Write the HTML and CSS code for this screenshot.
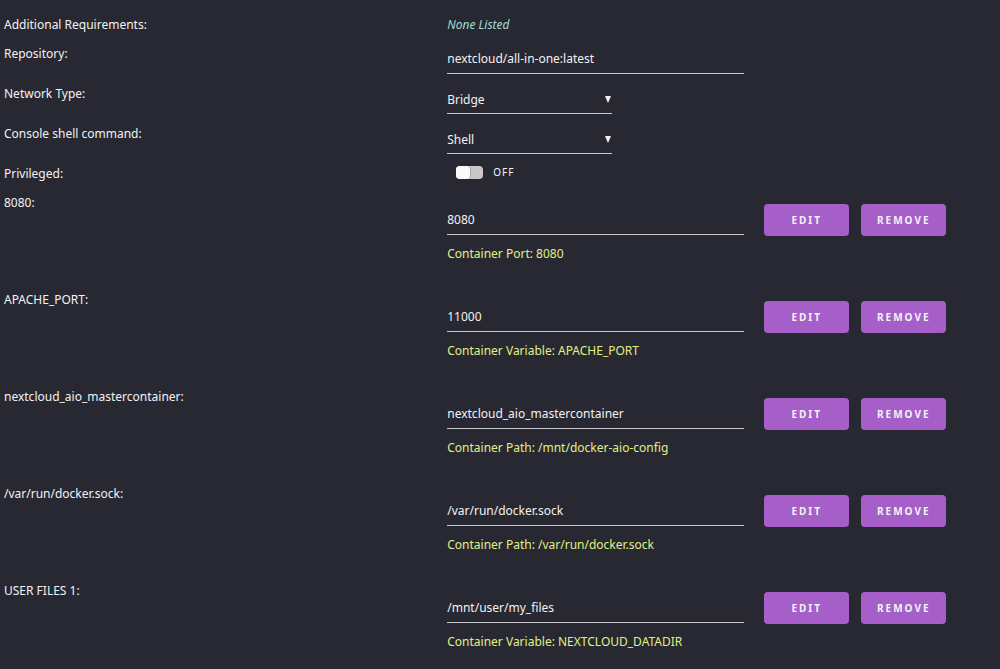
FILE: index.html
```
<!DOCTYPE html>
<html lang="en">
<head>
  <meta charset="UTF-8">
  <meta name="viewport" content="width=device-width, initial-scale=1.0">
  <title>Update Container</title>
  <link rel="stylesheet" href="styles.css">
</head>
<body>
  <form class="settings">
    <div class="row short">
      <span class="name">Additional Requirements:</span>
      <em class="none">None Listed</em>
    </div>
    <div class="row">
      <label class="name" for="repository">Repository:</label>
      <input type="text" id="repository" value="nextcloud/all-in-one:latest">
    </div>
    <div class="row">
      <label class="name" for="network">Network Type:</label>
      <div class="select">
        <select id="network">
          <option>Bridge</option>
          <option>Host</option>
          <option>None</option>
        </select>
      </div>
    </div>
    <div class="row">
      <label class="name" for="shell">Console shell command:</label>
      <div class="select">
        <select id="shell">
          <option>Shell</option>
          <option>Bash</option>
        </select>
      </div>
    </div>
    <div class="row short">
      <label class="name" for="privileged">Privileged:</label>
      <div class="switch">
        <input type="checkbox" id="privileged">
        <span>OFF</span>
      </div>
    </div>

    <!-- container config -->
    <div class="row config">
      <label class="name" for="conf1">8080:</label>
      <div class="value">
        <div class="line">
          <input type="text" id="conf1" value="8080">
          <button type="button">Edit</button>
          <button type="button">Remove</button>
        </div>
        <div class="desc">Container Port: 8080</div>
      </div>
    </div>
    <div class="row config">
      <label class="name" for="conf2">APACHE_PORT:</label>
      <div class="value">
        <div class="line">
          <input type="text" id="conf2" value="11000">
          <button type="button">Edit</button>
          <button type="button">Remove</button>
        </div>
        <div class="desc">Container Variable: APACHE_PORT</div>
      </div>
    </div>
    <div class="row config">
      <label class="name" for="conf3">nextcloud_aio_mastercontainer:</label>
      <div class="value">
        <div class="line">
          <input type="text" id="conf3" value="nextcloud_aio_mastercontainer">
          <button type="button">Edit</button>
          <button type="button">Remove</button>
        </div>
        <div class="desc">Container Path: /mnt/docker-aio-config</div>
      </div>
    </div>
    <div class="row config">
      <label class="name" for="conf4">/var/run/docker.sock:</label>
      <div class="value">
        <div class="line">
          <input type="text" id="conf4" value="/var/run/docker.sock">
          <button type="button">Edit</button>
          <button type="button">Remove</button>
        </div>
        <div class="desc">Container Path: /var/run/docker.sock</div>
      </div>
    </div>
    <div class="row config">
      <label class="name" for="conf5">USER FILES 1:</label>
      <div class="value">
        <div class="line">
          <input type="text" id="conf5" value="/mnt/user/my_files">
          <button type="button">Edit</button>
          <button type="button">Remove</button>
        </div>
        <div class="desc">Container Variable: NEXTCLOUD_DATADIR</div>
      </div>
    </div>
  </form>
</body>
</html>
```
FILE: styles.css
```
* {
  box-sizing: border-box;
}
body {
  margin: 0;
  background-color: #282833;
  color: #f2f2f2;
  font-family: "Noto Sans", sans-serif;
  font-size: 12px;
  line-height: 20px;
}
.settings {
  padding: 15px 11px 0 4px;
}
.row {
  display: flex;
  align-items: flex-start;
  padding-bottom: 10px;
}
.row.short {
  padding-bottom: 9px;
}
.name {
  flex: 0 0 45%;
}
.none {
  color: #9fded0;
}
input[type="text"],
select {
  height: 30px;
  margin: 0;
  padding: 0;
  border: 0;
  border-bottom: 1px solid #c8c8cd;
  border-radius: 0;
  outline: none;
  background: transparent;
  color: inherit;
  font: inherit;
}
input[type="text"] {
  width: 297px;
}
.select {
  position: relative;
  width: 165px;
}
select {
  width: 100%;
  padding-top: 2px;
  appearance: none;
}
.select::after {
  content: "";
  position: absolute;
  right: 1px;
  top: 12px;
  border: 3px solid transparent;
  border-top: 7px solid #f2f2f2;
  border-bottom: 0;
  pointer-events: none;
}

/* on/off switch */
.switch {
  display: flex;
  align-items: center;
  gap: 10px;
  height: 16px;
  padding-left: 9px;
  font-size: 10px;
  letter-spacing: 1px;
}
.switch input {
  appearance: none;
  width: 27px;
  height: 13px;
  margin: 0;
  border-radius: 4px;
  background-color: #c8c8c8;
}
.switch input::before {
  content: "";
  display: block;
  width: 14px;
  height: 13px;
  border-right: 1px solid #a8a8a8;
  border-radius: 4px;
  background-color: #fafafa;
}
.switch input:checked::before {
  margin-left: 13px;
}

.config {
  padding-bottom: 26px;
}
.config:last-child {
  padding-bottom: 0;
}
.line {
  display: flex;
  align-items: center;
  gap: 12px;
  padding-top: 11px;
}
.line input {
  margin-right: 8px;
}
.desc {
  margin-top: 8px;
  color: #e0f084;
}
button {
  width: 85px;
  height: 32px;
  padding: 0;
  border: 0;
  border-radius: 4px;
  background-color: #a65fc9;
  color: #f2f2f2;
  font: bold 10px "Noto Sans", sans-serif;
  letter-spacing: 2px;
  text-transform: uppercase;
  cursor: pointer;
}
button:hover {
  background-color: #b673d6;
}
```
